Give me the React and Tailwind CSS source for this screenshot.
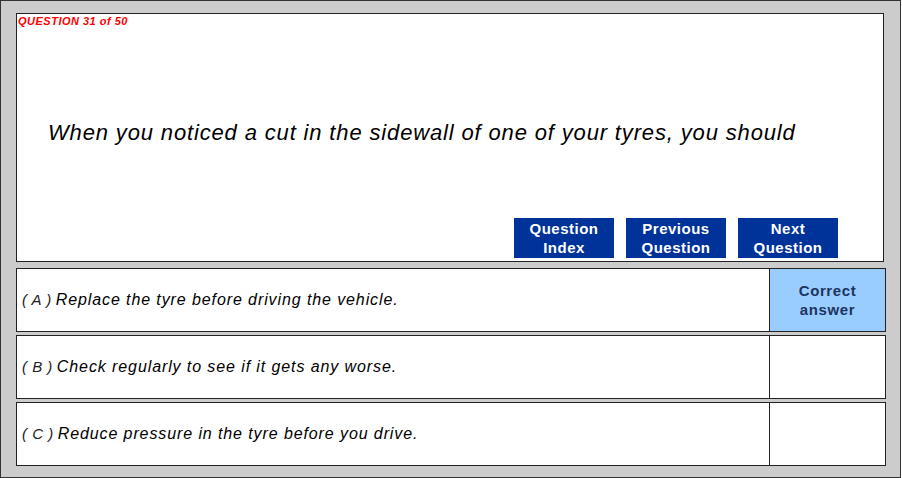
import React from 'react';

const ANSWERS = [
  { key: 'A', text: 'Replace the tyre before driving the vehicle.', correct: true },
  { key: 'B', text: 'Check regularly to see if it gets any worse.', correct: false },
  { key: 'C', text: 'Reduce pressure in the tyre before you drive.', correct: false },
];

function NavButton({ top, bottom }) {
  return (
    <button className="w-[100px] h-[40px] bg-[#003399] text-white font-bold text-[15px] leading-[19px] tracking-[0.5px] flex flex-col items-center justify-center">
      <span>{top}</span>
      <span>{bottom}</span>
    </button>
  );
}

export default function App() {
  return (
    <div className="w-[902px] h-[478px] bg-white" style={{ fontFamily: '"Liberation Sans", Arial, sans-serif' }}>
      <div className="w-[901px] h-[478px] bg-[#cccccc] border border-[#333333] pt-[12px] pl-[15px]">
        {/* question panel */}
        <div className="w-[868px] h-[249px] bg-white border border-[#222] flex flex-col">
          <div className="text-[11px] font-bold italic text-[#ff0000] leading-[13px] tracking-[0.5px] pl-[1px] pt-[1px]">QUESTION 31 of 50</div>
          <div className="pl-[31px] pt-[92px] text-[22px] italic text-black leading-[26px] tracking-[0.85px]">
            When you noticed a cut in the sidewall of one of your tyres, you should
          </div>
          <div className="flex justify-end gap-[12px] pr-[45px] pt-[72px]">
            <NavButton top="Question" bottom="Index" />
            <NavButton top="Previous" bottom="Question" />
            <NavButton top="Next" bottom="Question" />
          </div>
        </div>

        {/* answers */}
        <div className="flex flex-col gap-[3px] mt-[6px]">
          {ANSWERS.map(a => (
            <div key={a.key} className="w-[870px] h-[64px] bg-white border border-[#222] flex">
              <div className="flex-1 flex items-center pl-[5px] text-[16px] italic text-black tracking-[0.9px]">
                <span className="text-[15px] text-[#222] mr-[4px] tracking-[0.5px]">( {a.key} )</span>
                <span>{a.text}</span>
              </div>
              <div className={`w-[116px] border-l border-[#222] flex flex-col items-center justify-center text-[15px] font-bold leading-[19px] tracking-[0.6px] text-[#1c3460] ${a.correct ? 'bg-[#99ccff]' : 'bg-white'}`}>
                {a.correct && (
                  <>
                    <span>Correct</span>
                    <span>answer</span>
                  </>
                )}
              </div>
            </div>
          ))}
        </div>
      </div>
    </div>
  );
}
